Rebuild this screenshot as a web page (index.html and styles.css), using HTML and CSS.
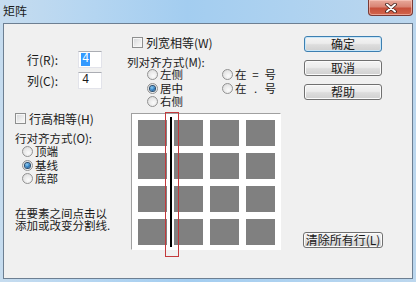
FILE: index.html
```html
<!DOCTYPE html>
<html>
<head>
<meta charset="utf-8">
<link rel="stylesheet" href="styles.css">
</head>
<body>
<div class="window">
  <div class="titlebar">
    <span class="title">矩阵</span>
    <div class="close">
      <svg width="14" height="10" viewBox="0 0 14 10">
        <path d="M3 1.5 L11 8.5 M11 1.5 L3 8.5" stroke="#3a1a14" stroke-width="3.6" stroke-linecap="round"/>
        <path d="M3 1.5 L11 8.5 M11 1.5 L3 8.5" stroke="#ffffff" stroke-width="2" stroke-linecap="round"/>
      </svg>
    </div>
  </div>
  <div class="client">
    <div class="col-left">
      <div class="field"><span class="field-label">行(R):</span><span class="input"><span class="selected">4</span></span></div>
      <div class="field"><span class="field-label">列(C):</span><span class="input">4</span></div>
      <div class="check-row row-left"><span class="checkbox"></span>行高相等(H)</div>
      <div class="group-label">行对齐方式(O):</div>
      <div class="radio-list">
        <div class="radio-row"><span class="radio"></span>顶端</div>
        <div class="radio-row"><span class="radio on"></span>基线</div>
        <div class="radio-row"><span class="radio"></span>底部</div>
      </div>
      <div class="hint">
        <div class="hint-line">在要素之间点击以</div>
        <div class="hint-line">添加或改变分割线.</div>
      </div>
    </div>
    <div class="col-mid">
      <div class="check-row row-mid"><span class="checkbox"></span>列宽相等(W)</div>
      <div class="group-label">列对齐方式(M):</div>
      <div class="radio-grid">
        <div class="radio-row"><span class="radio"></span>左侧</div>
        <div class="radio-row"><span class="radio"></span>在<span class="sym">=</span>号</div>
        <div class="radio-row"><span class="radio on"></span>居中</div>
        <div class="radio-row"><span class="radio"></span>在<span class="sym">.</span>号</div>
        <div class="radio-row"><span class="radio"></span>右侧</div>
      </div>
      <div class="preview">
        <div class="cells">
          <span class="cell"></span><span class="cell"></span><span class="cell"></span><span class="cell"></span>
          <span class="cell"></span><span class="cell"></span><span class="cell"></span><span class="cell"></span>
          <span class="cell"></span><span class="cell"></span><span class="cell"></span><span class="cell"></span>
          <span class="cell"></span><span class="cell"></span><span class="cell"></span><span class="cell"></span>
        </div>
        <div class="divider-line"></div>
        <div class="divider-box"></div>
      </div>
    </div>
    <div class="col-right">
      <div class="btn default">确定</div>
      <div class="btn">取消</div>
      <div class="btn">帮助</div>
      <div class="btn btn-clear">清除所有行(L)</div>
    </div>
  </div>
</div>
</body>
</html>
```

FILE: styles.css
```css
html, body {
  margin: 0;
  padding: 0;
  background: #ffffff;
}
body {
  font-family: "Noto Sans CJK SC", "Noto Sans", sans-serif;
  font-size: 12px;
  color: #1a1a1a;
}
.window {
  width: 416px;
  height: 282px;
  box-sizing: border-box;
  background: linear-gradient(to right, #c6dcef 0%, #b6d6f1 20%, #a3cdf0 45%, #aed2f0 70%, #bcd7ee 100%);
  display: flex;
  flex-direction: column;
}
.titlebar {
  height: 23px;
  display: flex;
  align-items: flex-start;
  justify-content: space-between;
}
.title {
  margin: 2px 0 0 3px;
  font-size: 12px;
  line-height: 17px;
  color: #1b1b1b;
}
.close {
  width: 45px;
  height: 16px;
  box-sizing: border-box;
  margin-right: 3px;
  border: 1px solid #7a3a35;
  border-top: none;
  border-radius: 0 0 4px 4px;
  background: linear-gradient(#e8a99b 0%, #d98474 45%, #c7503b 55%, #d2654c 100%);
  box-shadow: inset 0 0 0 1px rgba(255, 210, 200, 0.55);
  display: flex;
  align-items: center;
  justify-content: center;
}
.close svg { display: block; }

.client {
  flex: 1;
  margin: 0 3px 3px 3px;
  border: 1px solid #6d7f92;
  background: #f0f0f0;
  display: flex;
}

.col-left {
  width: 123px;
  display: flex;
  flex-direction: column;
}
.field {
  display: flex;
  align-items: center;
  height: 17px;
  padding-left: 23px;
  margin-top: 4px;
}
.field:first-child { margin-top: 27px; }
.field-label {
  width: 51px;
  line-height: 17px;
}
.input {
  width: 24px;
  height: 17px;
  box-sizing: border-box;
  background: #fff;
  border: 1px solid #e2e3ea;
  border-top-color: #abadb3;
  padding-left: 3px;
  line-height: 15px;
  font-family: "Liberation Mono", monospace;
  font-size: 12px;
}
.selected {
  display: inline-block;
  background: #3399ff;
  color: #fff;
  line-height: 13px;
  padding: 0 1px;
  margin-left: -1px;
}

.check-row {
  display: flex;
  align-items: center;
  height: 13px;
  line-height: 13px;
}
.row-left { margin-top: 23px; padding-left: 11px; }
.row-mid { margin-top: 12px; padding-left: 5px; }
.checkbox {
  width: 11px;
  height: 11px;
  box-sizing: border-box;
  border: 1px solid #8e8f8f;
  background: linear-gradient(135deg, #d4d6d9 0%, #eeeeee 60%, #fafafa 100%);
  box-shadow: inset 0 0 0 1px #f6f6f6;
  margin-right: 3px;
  flex: none;
}
.group-label {
  line-height: 12px;
  height: 12px;
  font-size: 11.5px;
}
.col-left .group-label { margin-top: 7px; padding-left: 11px; }
.col-mid .group-label { margin-top: 7px; }

.radio-list {
  padding-left: 18px;
  margin-top: 1px;
}
.radio-row {
  display: flex;
  align-items: center;
  height: 13.5px;
  line-height: 13.5px;
  font-size: 11.5px;
  white-space: nowrap;
}
.radio {
  width: 11px;
  height: 11px;
  box-sizing: border-box;
  border-radius: 50%;
  border: 1px solid #929292;
  background: radial-gradient(circle at 60% 65%, #fbfbfb 0%, #e6e6e6 60%, #d2d2d2 100%);
  margin-right: 2px;
  flex: none;
  display: flex;
  align-items: center;
  justify-content: center;
}
.radio.on::after {
  content: "";
  width: 5px;
  height: 5px;
  border-radius: 50%;
  background: radial-gradient(circle at 40% 35%, #8fd0f5 0%, #2d7bbf 55%, #123f6e 100%);
  box-shadow: 0 0 0 1px #2a4d6e;
}
.hint {
  margin-top: 21px;
  padding-left: 11px;
}
.hint-line {
  height: 12px;
  line-height: 12px;
  font-size: 11.5px;
  white-space: nowrap;
}

.col-mid {
  width: 154px;
  display: flex;
  flex-direction: column;
}
.radio-grid {
  display: grid;
  grid-template-columns: 75px auto;
  padding-left: 20px;
}
.sym {
  display: inline-block;
  width: 18px;
  text-align: center;
}
.preview {
  position: relative;
  width: 150px;
  height: 137px;
  box-sizing: border-box;
  margin: 4px 0 0 4px;
  background: #fff;
  border-top: 1px solid #a0a0a0;
  border-left: 1px solid #a0a0a0;
  border-right: 1px solid #ffffff;
  border-bottom: 1px solid #ffffff;
  padding: 6px 0 0 6px;
}
.cells {
  display: grid;
  grid-template-columns: repeat(4, 29px);
  grid-auto-rows: 26px;
  gap: 7px;
}
.cell { background: #808080; }
.divider-line {
  position: absolute;
  left: 38px;
  top: 3px;
  width: 2px;
  height: 130px;
  background: #000;
}
.divider-box {
  position: absolute;
  left: 33px;
  top: -2px;
  width: 14px;
  height: 145px;
  box-sizing: border-box;
  border: 1px solid #c3393b;
}

.col-right {
  padding: 12px 0 0 23px;
  display: flex;
  flex-direction: column;
}
.btn {
  width: 78px;
  height: 16px;
  box-sizing: border-box;
  border: 1px solid #707070;
  border-radius: 3px;
  background: linear-gradient(#f4f4f4 0%, #ececec 45%, #dddddd 55%, #d0d0d0 100%);
  box-shadow: inset 0 0 0 1px #fbfbfb;
  text-align: center;
  line-height: 14px;
  font-size: 12px;
  margin-bottom: 8px;
}
.btn.default {
  border-color: #3c7fb1;
  box-shadow: inset 0 0 0 1px #c8e6f8;
}
.btn-clear {
  width: 80px;
  margin: 124px 0 0 -1px;
  white-space: nowrap;
}
```
